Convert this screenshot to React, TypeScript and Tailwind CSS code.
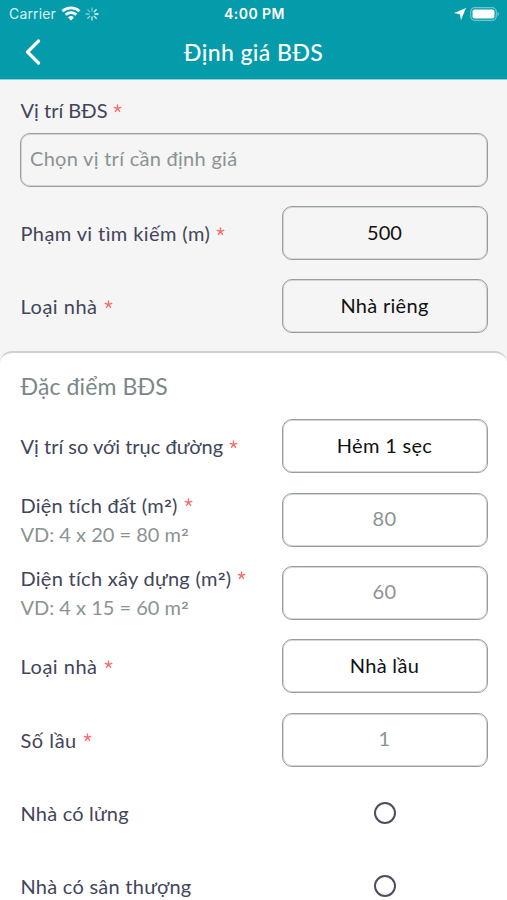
import type { ReactNode } from "react";

function Label({ children, className = "", required = false }: { children: ReactNode; className?: string; required?: boolean }) {
  return (
    <div className="flex h-[28px] items-center whitespace-nowrap text-[20px] leading-[28px] text-[#42455a]">
      <span className={className}>{children}</span>
      {required && (
        <svg viewBox="0 0 10 10" className="mb-[4px] ml-[6px] size-[9px] shrink-0 stroke-[#ff6b6b]" fill="none" strokeWidth="1.5" strokeLinecap="round">
          <path d="M5 1v4M5 5 1.3 3.8M5 5l3.7-1.2M5 5 2.7 8.3M5 5l2.3 3.3" />
        </svg>
      )}
    </div>
  );
}

function Squared() {
  return <span className="align-[-2px] font-['Inter',sans-serif] text-[18px] leading-none">²</span>;
}

function Box({ children, className = "" }: { children: ReactNode; className?: string }) {
  return (
    <div className="flex h-[54px] w-[206px] shrink-0 items-center justify-center whitespace-nowrap rounded-[10px] border border-[#999d9d] pb-[3px] pr-[1px] text-[20px] tracking-[0.3px] text-[#111111] shadow-[inset_0_0_0_1px_#d4d7d7]">
      <span className={className}>{children}</span>
    </div>
  );
}

function Row({ children }: { children: ReactNode }) {
  return <div className="flex h-[73.33px] shrink-0 items-center justify-between pl-[20.5px] pr-[19px]">{children}</div>;
}

function Radio() {
  return (
    <div className="flex w-[206px] justify-center">
      <div className="size-[22px] rounded-full border-2 border-[#4d4e60]" />
    </div>
  );
}

export default function App() {
  return (
    <div className="flex h-[900px] w-[507px] flex-col overflow-hidden bg-[#f5f5f5] font-['Lato','Noto_Sans',sans-serif] [font-variant-ligatures:none]">
      <header className="h-[80px] shrink-0 border-b border-[#83d5dc] bg-[#049baa] text-white">
        <div className="grid h-[27px] grid-cols-3 items-center pl-[9px] pr-[7px] font-['Inter',sans-serif] text-[14px]">
          <div className="flex items-center">
            <span className="tracking-[0.15px] text-[#d9f5f7]">Carrier</span>
            <svg viewBox="0 0 20 15" className="ml-[5px] h-[15px] w-[20px]" fill="none" stroke="white" strokeWidth="2.6">
              <path d="M1.5 5.3a12.3 12.3 0 0 1 17 0M4.7 8.7a7.7 7.7 0 0 1 10.6 0" />
              <path d="M7 11.4a4.5 4.5 0 0 1 6 0l-3 3.1Z" fill="white" stroke="none" />
            </svg>
            <svg viewBox="0 0 14 14" className="ml-[4px] size-[14px]" stroke="white" strokeWidth="1.3" strokeLinecap="round">
              <path d="M7 1v3" opacity=".45" />
              <path d="m11.2 2.8-2.1 2.1" opacity=".9" />
              <path d="M13 7h-3" />
              <path d="m11.2 11.2-2.1-2.1" opacity=".9" />
              <path d="M7 13v-3" opacity=".8" />
              <path d="m2.8 11.2 2.1-2.1" opacity=".6" />
              <path d="M1 7h3" opacity=".5" />
              <path d="m2.8 2.8 2.1 2.1" opacity=".4" />
            </svg>
          </div>
          <span className="text-center font-semibold tracking-[0.45px]">4:00 PM</span>
          <div className="flex items-center justify-end gap-[4px]">
            <svg viewBox="0 0 12 12" className="size-[12px]" fill="white">
              <path d="M12 0 0 5l5.8 1.2L7 12Z" />
            </svg>
            <svg viewBox="0 0 30 14" className="h-[14px] w-[30px]">
              <rect x=".7" y=".7" width="25.6" height="12.6" rx="4" fill="none" stroke="#70c6ce" strokeWidth="1.2" />
              <rect x="2.5" y="2.5" width="22" height="9" rx="2" fill="white" />
              <path d="M27.5 4.8c2 .8 2 3.6 0 4.4Z" fill="#70c6ce" />
            </svg>
          </div>
        </div>
        <div className="grid h-[52px] grid-cols-[1fr_auto_1fr] items-center">
          <svg viewBox="0 0 16 26" className="mb-[2px] ml-[25px] h-[26px] w-[16px]" fill="none" stroke="white" strokeWidth="3.2" strokeLinecap="round" strokeLinejoin="round">
            <path d="M13.5 2 2.5 13l11 11" />
          </svg>
          <h1 className="mb-[1px] text-[23px] font-medium tracking-[0.4px]">Định giá BĐS</h1>
        </div>
      </header>

      <section className="shrink-0 pt-[16px]">
        <div className="pl-[20.5px]">
          <Label required>Vị trí BĐS</Label>
        </div>
        <div className="ml-[20px] mr-[19px] mt-[9px] flex h-[54px] items-center rounded-[10px] border border-[#999d9d] pb-[4px] pl-[9px] text-[20px] tracking-[0.28px] text-[#8b9393] shadow-[inset_0_0_0_1px_#d4d7d7]">
          <span>Chọn vị trí cần định giá</span>
        </div>
        <div className="mt-[9.5px]">
          <Row>
            <Label className="tracking-[0.4px]" required>Phạm vi tìm kiếm (m)</Label>
            <Box className="tracking-normal">500</Box>
          </Row>
          <Row>
            <Label className="tracking-[0.5px]" required>Loại nhà</Label>
            <Box>Nhà riêng</Box>
          </Row>
        </div>
      </section>

      <section className="mt-[8px] flex-1 rounded-t-[12px] border-t-2 border-[#d0d0d0] bg-white">
        <h2 className="flex h-[56.4px] items-center pl-[20.5px] pt-[10px] text-[23px] tracking-[0.1px] text-[#7b8788]">
          <span>Đặc điểm BĐS</span>
        </h2>
        <Row>
          <Label required>Vị trí so với trục đường</Label>
          <Box>Hẻm 1 sẹc</Box>
        </Row>
        <Row>
          <div>
            <Label className="tracking-[0.25px]" required>Diện tích đất (m<Squared />)</Label>
            <div className="text-[20px] leading-[30px] text-[#8b9393]">VD: 4 x 20 = 80 m<Squared /></div>
          </div>
          <Box className="text-[#8b9393]">80</Box>
        </Row>
        <Row>
          <div>
            <Label className="tracking-[0.28px]" required>Diện tích xây dựng (m<Squared />)</Label>
            <div className="text-[20px] leading-[30px] text-[#8b9393]">VD: 4 x 15 = 60 m<Squared /></div>
          </div>
          <Box className="text-[#8b9393]">60</Box>
        </Row>
        <Row>
          <Label className="tracking-[0.5px]" required>Loại nhà</Label>
          <Box>Nhà lầu</Box>
        </Row>
        <Row>
          <Label className="tracking-[0.5px]" required>Số lầu</Label>
          <Box className="text-[#8b9393]">1</Box>
        </Row>
        <Row>
          <Label className="tracking-[0.2px]">Nhà có lửng</Label>
          <Radio />
        </Row>
        <Row>
          <Label className="tracking-[0.25px]">Nhà có sân thượng</Label>
          <Radio />
        </Row>
      </section>
    </div>
  );
}
